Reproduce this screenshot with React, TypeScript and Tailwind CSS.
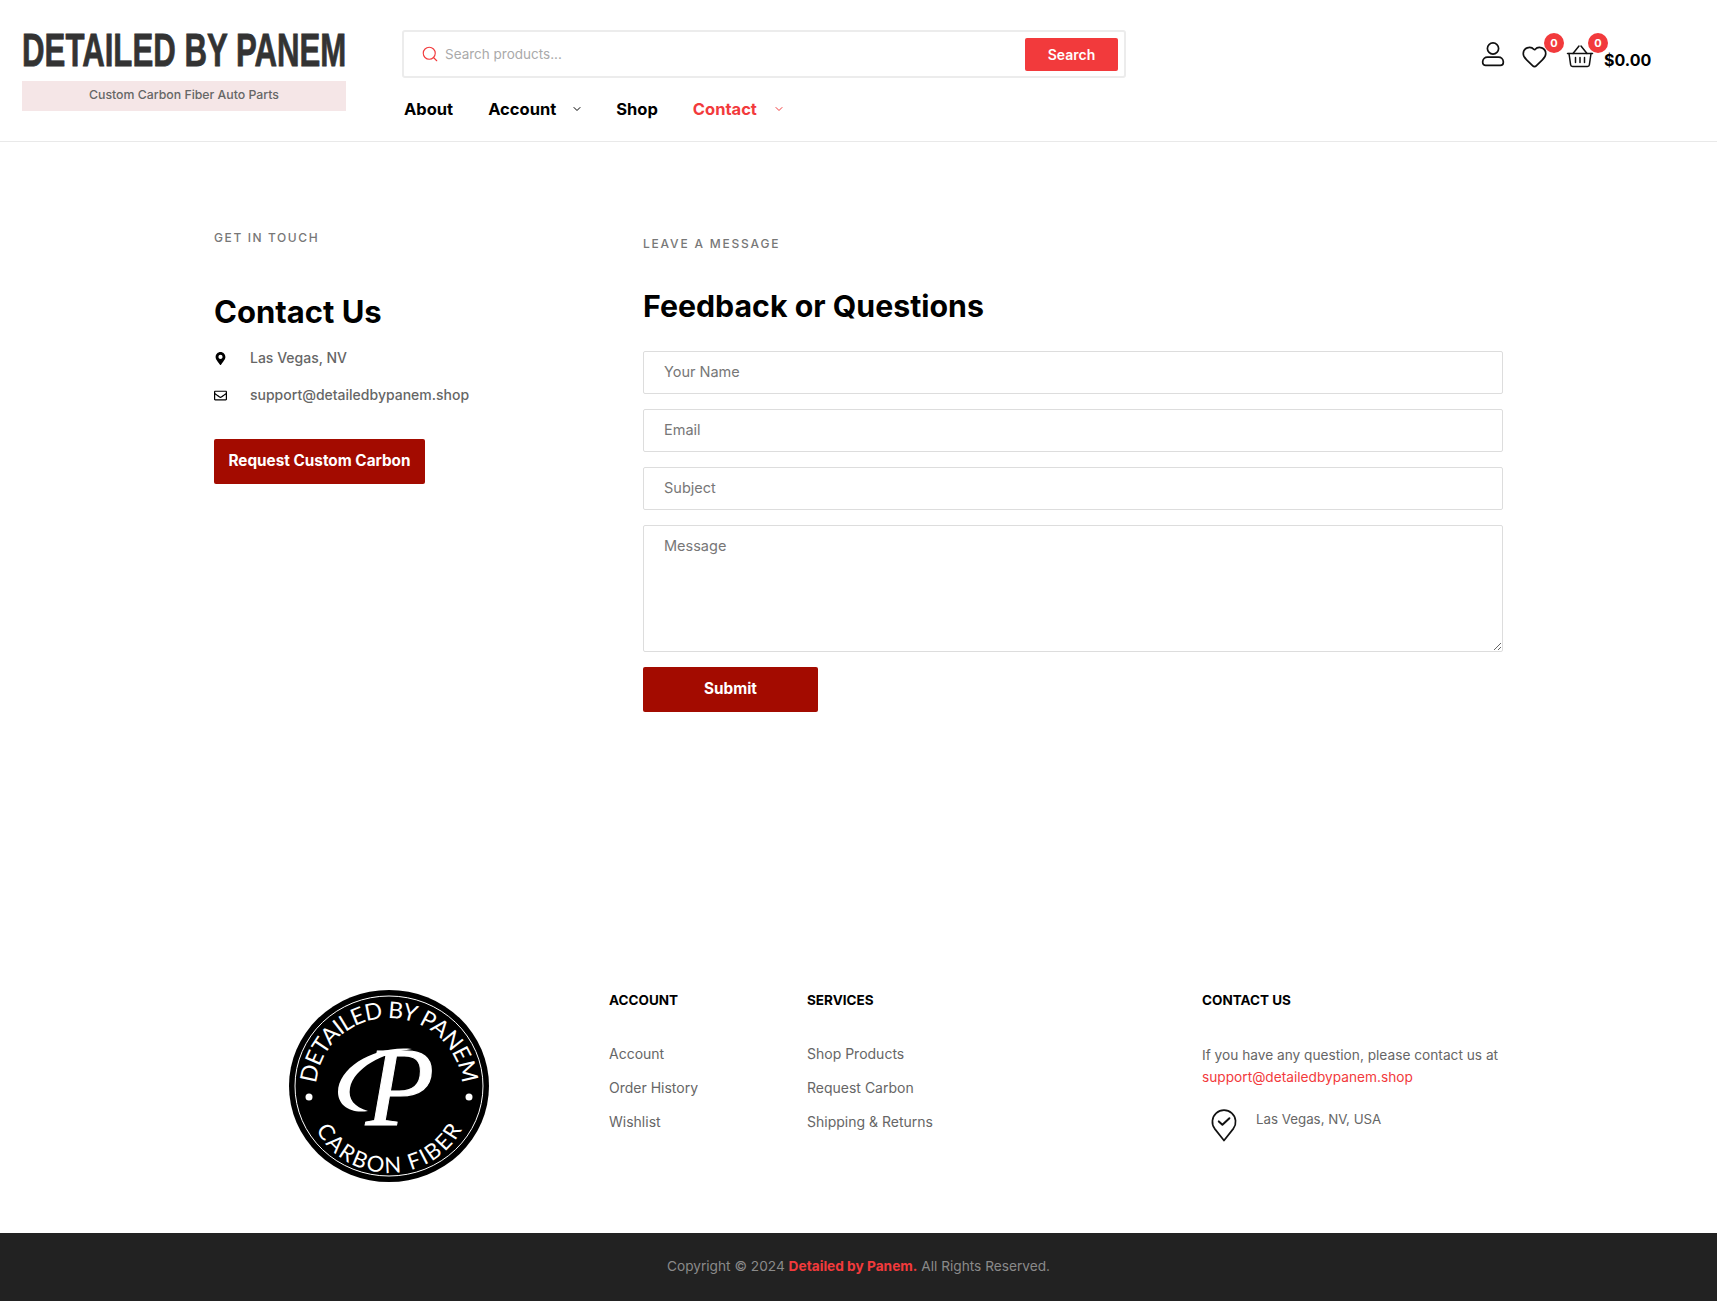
import React from "react";
import { ChevronDown, Heart, Search } from "lucide-react";
import { FaMapMarkerAlt, FaRegEnvelope } from "react-icons/fa";

const body = { fontFamily: "Inter, 'Noto Sans', sans-serif" };

function UserIcon() {
  return (
    <svg width="24" height="26" viewBox="0 0 24 26" fill="none" stroke="#111" strokeWidth="1.7">
      <circle cx="12" cy="7.5" r="5.6" />
      <path d="M6.5 16.2h11a4.8 4.8 0 0 1 4.8 4.4v.9a2.9 2.9 0 0 1-2.9 2.9H4.6a2.9 2.9 0 0 1-2.9-2.9v-.9a4.8 4.8 0 0 1 4.8-4.4z" />
    </svg>
  );
}

function BasketIcon() {
  return (
    <svg width="28" height="24" viewBox="0 0 28 24" fill="none" stroke="#111" strokeWidth="1.5" strokeLinecap="round">
      <path d="M1.5 9.5h25" />
      <path d="M3 9.5l1.6 11.2a2 2 0 0 0 2 1.8h14.8a2 2 0 0 0 2-1.8L25 9.5" />
      <path d="M7 9.5l6-7.5M21 9.5l-6-7.5" />
      <path d="M9.5 13.5v5M14 13.5v5M18.5 13.5v5" />
    </svg>
  );
}

function PinCheck() {
  return (
    <svg width="26" height="34" viewBox="0 0 26 34" fill="none" stroke="#111" strokeWidth="1.7" strokeLinecap="round" strokeLinejoin="round">
      <path d="M13 32.5 3.6 20.6A11.6 11.6 0 1 1 22.4 20.6z" />
      <path d="M7.8 13.4l3.6 3.4 7-6.6" strokeWidth="2" />
    </svg>
  );
}

function Logo() {
  return (
    <svg width="202" height="194" viewBox="0 0 202 194">
      <ellipse cx="101" cy="97" rx="100" ry="96" fill="#000" />
      <ellipse cx="101" cy="97" rx="94" ry="90" fill="none" stroke="#fff" strokeWidth="1" />
      <defs>
        <path id="logoTop" d="M28 100a73 71 0 0 1 146 0" />
        <path id="logoBottom" d="M19 104a82 80 0 0 0 164 0" />
      </defs>
      <text fill="#fff" fontSize="23" fontFamily="Lato, sans-serif">
        <textPath href="#logoTop" startOffset="50%" textAnchor="middle" textLength="215">DETAILED BY PANEM</textPath>
      </text>
      <text fill="#fff" fontSize="22" fontFamily="Lato, sans-serif">
        <textPath href="#logoBottom" startOffset="50%" textAnchor="middle" textLength="178">CARBON FIBER</textPath>
      </text>
      <circle cx="21" cy="108" r="3.5" fill="#fff" />
      <circle cx="181" cy="108" r="3.5" fill="#fff" />
      <path d="M124 60C88 56 50 78 50 103c0 13 12 22 30 19-14-4-20-12-18-23 4-20 32-35 62-39z" fill="#fff" />
      <text x="112" y="136" textAnchor="middle" fill="#fff" fontSize="112" fontStyle="italic" fontFamily="'Liberation Serif', serif" stroke="#fff" strokeWidth="1">P</text>
    </svg>
  );
}

export default function App() {
  return (
    <div className="bg-white min-h-[1301px] flex flex-col text-[#555]" style={body}>
      {/* header */}
      <header className="h-[142px] border-b border-[#e9e9e9] pl-[22px] pt-[30px] flex">
        <div className="w-[324px]">
          <div className="h-[51px] flex justify-center">
            <span className="-mt-[1px] h-[42px] text-[#333] font-bold text-[47px] leading-[42px] whitespace-nowrap scale-x-[0.664] [-webkit-text-stroke:0.8px_#333]" style={{ fontFamily: "'Liberation Sans', sans-serif" }}>
              DETAILED BY PANEM
            </span>
          </div>
          <div className="h-[30px] bg-[#f5e6e7] text-center text-[12.3px] leading-[28px] font-medium text-[#666]">
            Custom Carbon Fiber Auto Parts
          </div>
        </div>
        <div className="ml-[56px] w-[724px]">
          <div className="h-[48px] border-2 border-[#ececec] rounded-[3px] flex items-center pl-[17px] pr-[6px]">
            <Search size={18} strokeWidth={1.5} className="text-[#f23a3c]" />
            <span className="ml-[6px] flex-1 text-[13.5px] text-[#aaa]">Search products...</span>
            <button className="w-[93px] h-[33px] bg-[#f23a3c] text-white text-[14px] font-semibold rounded-[2px]">Search</button>
          </div>
          <nav className="mt-[19px] ml-[2px] flex items-center text-[16.5px] font-bold text-black">
            <a>About</a>
            <a className="ml-[35px]">Account</a>
            <ChevronDown size={12} className="ml-[15px]" />
            <a className="ml-[33px]">Shop</a>
            <a className="ml-[35px] text-[#f23a3c]">Contact</a>
            <ChevronDown size={12} className="ml-[16px] text-[#f23a3c]" />
          </nav>
        </div>
        <div className="ml-[355px] mt-[11px] flex items-start h-[30px]">
          <UserIcon />
          <div className="relative ml-[16px] mt-[2px]">
            <Heart size={27} strokeWidth={1.5} className="text-[#111]" />
            <span className="absolute -top-[10px] left-[23px] w-5 h-5 rounded-full bg-[#f23a3c] text-white text-[11px] font-bold leading-5 text-center">0</span>
          </div>
          <div className="relative ml-[18px] mt-[3px]">
            <BasketIcon />
            <span className="absolute -top-[11px] left-[22px] w-5 h-5 rounded-full bg-[#f23a3c] text-white text-[11px] font-bold leading-5 text-center">0</span>
          </div>
          <span className="ml-[10px] mt-[7px] text-[16px] font-bold text-black">$0.00</span>
        </div>
      </header>

      {/* contact */}
      <main className="w-[1291px] mx-auto grid grid-cols-[430px_860px] pt-[88px]">
        <section className="pl-[1px]">
          <div className="text-[12px] leading-4 font-medium tracking-[1.6px] text-[#777]">GET IN TOUCH</div>
          <h2 className="mt-[48px] text-[31px] leading-[36px] font-bold text-black">Contact Us</h2>
          <div className="mt-[18px] flex items-center text-[14px] leading-5 font-medium text-[#666]">
            <span className="w-[36px]"><FaMapMarkerAlt size={13} className="text-black" /></span>
            <span>Las Vegas, NV</span>
          </div>
          <div className="mt-[17px] flex items-center text-[14px] leading-5 font-medium text-[#666]">
            <span className="w-[36px]"><FaRegEnvelope size={13} className="text-black" /></span>
            <span>support@detailedbypanem.shop</span>
          </div>
          <button className="mt-[34px] w-[211px] h-[45px] bg-[#a30b00] text-white text-[15.3px] font-bold rounded-[2px]">Request Custom Carbon</button>
        </section>
        <section>
          <div className="mt-[6px] text-[12px] leading-4 font-medium tracking-[1.8px] text-[#777]">LEAVE A MESSAGE</div>
          <h2 className="mt-[36px] text-[30.3px] leading-[36px] font-bold text-black">Feedback or Questions</h2>
          <form className="mt-[27px] flex flex-col gap-[15px]">
            <input placeholder="Your Name" className="h-[43px] border border-[#ddd] rounded-[2px] px-[20px] pb-[2px] text-[14.5px] outline-none placeholder:text-[#777]" />
            <input placeholder="Email" className="h-[43px] border border-[#ddd] rounded-[2px] px-[20px] pb-[2px] text-[14.5px] outline-none placeholder:text-[#777]" />
            <input placeholder="Subject" className="h-[43px] border border-[#ddd] rounded-[2px] px-[20px] pb-[2px] text-[14.5px] outline-none placeholder:text-[#777]" />
            <textarea placeholder="Message" className="h-[127px] border border-[#ddd] rounded-[2px] px-[20px] py-[9px] text-[14.5px] outline-none placeholder:text-[#777]" />
            <button type="button" className="w-[175px] h-[45px] bg-[#a30b00] text-white text-[15.3px] font-bold rounded-[2px]">Submit</button>
          </form>
        </section>
      </main>

      {/* footer */}
      <footer className="w-[1291px] mx-auto mt-[277px] h-[244px] grid grid-cols-[396px_198px_395px_302px] text-[14px] text-[#666]">
        <div className="pl-[75px]"><Logo /></div>
        <div className="pt-[1px]">
          <h4 className="text-[13.5px] leading-5 font-bold text-black">ACCOUNT</h4>
          <ul className="mt-[34px] flex flex-col gap-[14px] leading-5">
            <li>Account</li>
            <li>Order History</li>
            <li>Wishlist</li>
          </ul>
        </div>
        <div className="pt-[1px]">
          <h4 className="text-[13.5px] leading-5 font-bold text-black">SERVICES</h4>
          <ul className="mt-[34px] flex flex-col gap-[14px] leading-5">
            <li>Shop Products</li>
            <li>Request Carbon</li>
            <li>Shipping &amp; Returns</li>
          </ul>
        </div>
        <div className="pt-[1px]">
          <h4 className="text-[13.5px] leading-5 font-bold text-black">CONTACT US</h4>
          <p className="mt-[34px] text-[13.7px] leading-[22px] whitespace-nowrap">
            If you have any question, please contact us at<br />
            <span className="text-[#f23a3c]">support@detailedbypanem.shop</span>
          </p>
          <div className="mt-[20px] pl-[9px] flex items-start">
            <PinCheck />
            <span className="ml-[19px] mt-[1px] text-[13.3px] leading-5">Las Vegas, NV, USA</span>
          </div>
        </div>
      </footer>
      <div className="flex-1 min-h-[68px] pb-[2px] bg-[#222] flex items-center justify-center text-[13.7px] text-[#8a8a8a]">
        Copyright © 2024&nbsp;<b className="text-[#f23a3c]">Detailed by Panem.</b>&nbsp;All Rights Reserved.
      </div>
    </div>
  );
}
